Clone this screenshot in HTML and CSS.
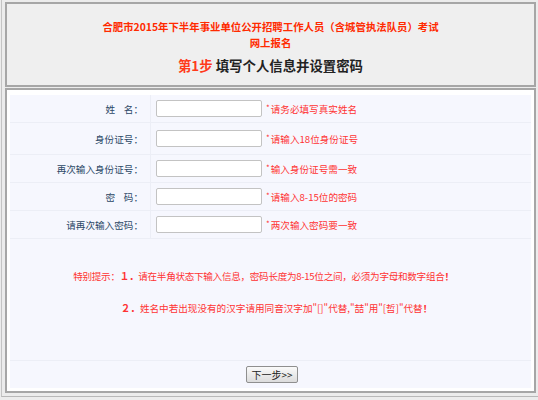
FILE: index.html
```html
<!DOCTYPE html>
<html lang="zh-CN">
<head>
    <meta charset="UTF-8">
    <title>网上报名 - 第1步</title>
    <link rel="stylesheet" href="styles.css">
</head>
<body>
    <div class="page">
        <div class="header-box">
            <p class="exam-title">合肥市2015年下半年事业单位公开招聘工作人员（含城管执法队员）考试</p>
            <p class="exam-title">网上报名</p>
            <h2 class="step-title"><span class="step-no">第1步</span> 填写个人信息并设置密码</h2>
        </div>

        <div class="form-box">
            <div class="form-panel">
                <div class="form-row">
                    <label class="field-label">姓&nbsp;&nbsp;&nbsp;&nbsp;名：</label>
                    <div class="field">
                        <input type="text" class="text-input">
                        <span class="hint"><i>*</i>请务必填写真实姓名</span>
                    </div>
                </div>
                <div class="form-row row-tall">
                    <label class="field-label">身份证号：</label>
                    <div class="field">
                        <input type="text" class="text-input">
                        <span class="hint"><i>*</i>请输入18位身份证号</span>
                    </div>
                </div>
                <div class="form-row">
                    <label class="field-label">再次输入身份证号：</label>
                    <div class="field">
                        <input type="text" class="text-input">
                        <span class="hint"><i>*</i>输入身份证号需一致</span>
                    </div>
                </div>
                <div class="form-row">
                    <label class="field-label">密&nbsp;&nbsp;&nbsp;&nbsp;码：</label>
                    <div class="field">
                        <input type="password" class="text-input">
                        <span class="hint"><i>*</i>请输入8-15位的密码</span>
                    </div>
                </div>
                <div class="form-row">
                    <label class="field-label">请再次输入密码：</label>
                    <div class="field">
                        <input type="password" class="text-input">
                        <span class="hint"><i>*</i>两次输入密码要一致</span>
                    </div>
                </div>

                <div class="notes">
                    <p class="note note-1">特别提示：<b>１．</b>请在半角状态下输入信息，密码长度为8-15位之间，必须为字母和数字组合<b>！</b></p>
                    <p class="note note-2"><b>２．</b>姓名中若出现没有的汉字请用同音汉字加"[]"代替,"喆"用"[哲]"代替<b>！</b></p>
                </div>

                <div class="actions">
                    <button type="button" class="next-btn">下一步&gt;&gt;</button>
                </div>
            </div>
        </div>
    </div>
</body>
</html>
```

FILE: styles.css
```css
body {
    margin: 0;
    background-color: #ececec;
    font-family: "Noto Sans CJK SC", "Liberation Sans", sans-serif;
    font-size: 9.6px;
}

.page {
    margin-left: 1px;
    padding: 2px 2px 3px 3px;
    border-left: 1px solid #c4c4c4;
    border-bottom: 1px solid #b8b8b8;
}

p {
    margin: 0;
}

.header-box {
    height: 85px;
    padding-top: 15px;
    box-sizing: border-box;
    background-color: #efefef;
    border: 2px solid #a6a6a6;
    text-align: center;
}

.exam-title {
    color: #ff2a00;
    font-weight: bold;
    font-size: 10.4px;
    line-height: 16px;
}

.step-title {
    margin: 5px 0 0;
    font-size: 13.4px;
    line-height: 18px;
    color: #222;
}

.step-no {
    color: #ff3a1a;
}

.form-box {
    margin-top: 1px;
    padding: 5px 3px 3px;
    background-color: #fff;
    border: 2px solid #a6a6a6;
}

.form-panel {
    background-color: #f6f7fe;
}

.form-row {
    display: flex;
    height: 28px;
    border-bottom: 1px solid #eceef6;
    box-sizing: border-box;
}

.row-tall {
    height: 32px;
}

.field-label {
    width: 141px;
    flex-shrink: 0;
    display: flex;
    align-items: center;
    justify-content: flex-end;
    padding-right: 7px;
    box-sizing: border-box;
    border-right: 1px solid #eceef6;
    color: #2b4766;
}

.field {
    display: flex;
    align-items: center;
    padding-left: 5px;
}

.text-input {
    width: 106px;
    height: 17px;
    margin: 0;
    padding: 0 2px;
    box-sizing: border-box;
    border: 1px solid #c3c3c3;
    border-radius: 2px;
    background-color: #fff;
}

.hint {
    margin-left: 4px;
    color: #f33;
}

.hint i {
    font-style: normal;
    font-size: 8px;
    vertical-align: 2px;
    margin-right: 1px;
}

.notes {
    height: 122px;
    padding-top: 29px;
    box-sizing: border-box;
    border-bottom: 1px solid #eceef6;
    text-align: center;
    color: #f33;
}

.note {
    line-height: 16px;
}

.note-1 {
    padding-right: 14px;
    letter-spacing: -0.3px;
}

.note-2 {
    margin-top: 16px;
    padding-left: 12px;
}

.actions {
    height: 27px;
    display: flex;
    align-items: center;
    justify-content: center;
    padding-left: 3px;
}

.next-btn {
    height: 17px;
    padding: 0 4px;
    font-family: "Noto Sans CJK SC", "Liberation Sans", sans-serif;
    font-size: 10px;
    line-height: 14px;
    color: #222;
    background: linear-gradient(#fafafa, #dcdcdc);
    border: 1px solid #8f8f8f;
    border-radius: 2px;
}
```
